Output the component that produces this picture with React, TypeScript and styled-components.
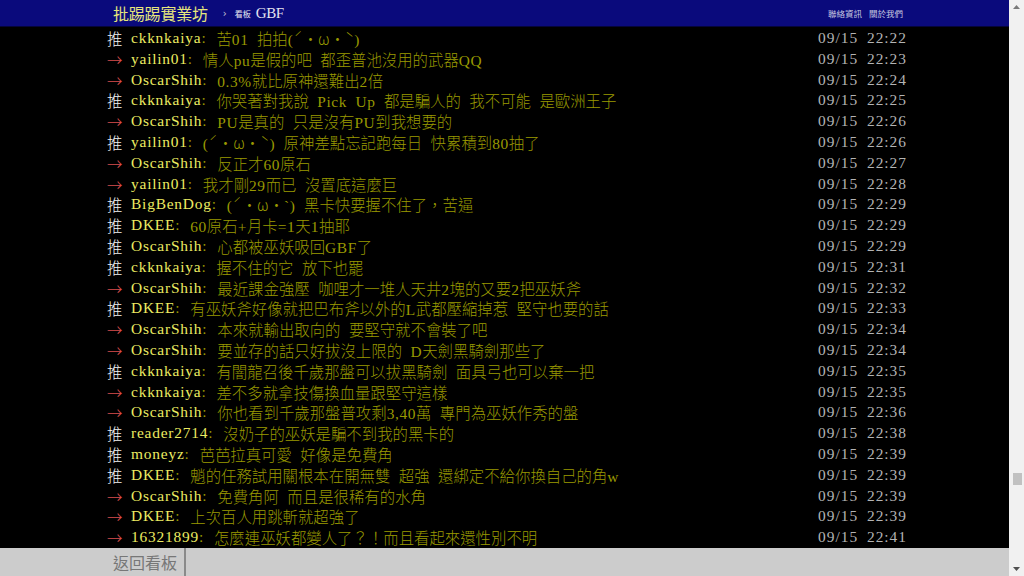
import React from 'react'
import styled, { createGlobalStyle } from 'styled-components'

type Push = {
  tag: '推' | '→'
  id: string
  text: string
  time: string
}

const pushes: Push[] = [
  { tag: '推', id: 'ckknkaiya', text: '苦01 拍拍(ˊ・ω・ˋ)', time: '09/15 22:22' },
  { tag: '→', id: 'yailin01', text: '情人pu是假的吧 都歪普池沒用的武器QQ', time: '09/15 22:23' },
  { tag: '→', id: 'OscarShih', text: '0.3%就比原神還難出2倍', time: '09/15 22:24' },
  { tag: '推', id: 'ckknkaiya', text: '你哭著對我說 Pick Up 都是騙人的 我不可能 是歐洲王子', time: '09/15 22:25' },
  { tag: '→', id: 'OscarShih', text: 'PU是真的 只是沒有PU到我想要的', time: '09/15 22:26' },
  { tag: '推', id: 'yailin01', text: '(ˊ・ω・ˋ) 原神差點忘記跑每日 快累積到80抽了', time: '09/15 22:26' },
  { tag: '→', id: 'OscarShih', text: '反正才60原石', time: '09/15 22:27' },
  { tag: '→', id: 'yailin01', text: '我才剛29而已 沒置底這麼巨', time: '09/15 22:28' },
  { tag: '推', id: 'BigBenDog', text: '(ˊ・ω・`) 黑卡快要握不住了，苦逼', time: '09/15 22:29' },
  { tag: '推', id: 'DKEE', text: '60原石+月卡=1天1抽耶', time: '09/15 22:29' },
  { tag: '推', id: 'OscarShih', text: '心都被巫妖吸回GBF了', time: '09/15 22:29' },
  { tag: '推', id: 'ckknkaiya', text: '握不住的它 放下也罷', time: '09/15 22:31' },
  { tag: '→', id: 'OscarShih', text: '最近課金強壓 咖哩才一堆人天井2塊的又要2把巫妖斧', time: '09/15 22:32' },
  { tag: '推', id: 'DKEE', text: '有巫妖斧好像就把巴布斧以外的L武都壓縮掉惹 堅守也要的話', time: '09/15 22:33' },
  { tag: '→', id: 'OscarShih', text: '本來就輸出取向的 要堅守就不會裝了吧', time: '09/15 22:34' },
  { tag: '→', id: 'OscarShih', text: '要並存的話只好拔沒上限的 D天劍黑騎劍那些了', time: '09/15 22:34' },
  { tag: '推', id: 'ckknkaiya', text: '有闇龍召後千歲那盤可以拔黑騎劍 面具弓也可以棄一把', time: '09/15 22:35' },
  { tag: '→', id: 'ckknkaiya', text: '差不多就拿技傷換血量跟堅守這樣', time: '09/15 22:35' },
  { tag: '→', id: 'OscarShih', text: '你也看到千歲那盤普攻剩3,40萬 專門為巫妖作秀的盤', time: '09/15 22:36' },
  { tag: '推', id: 'reader2714', text: '沒奶子的巫妖是騙不到我的黑卡的', time: '09/15 22:38' },
  { tag: '推', id: 'moneyz', text: '芭芭拉真可愛 好像是免費角', time: '09/15 22:39' },
  { tag: '推', id: 'DKEE', text: '魈的任務試用關根本在開無雙 超強 還綁定不給你換自己的角w', time: '09/15 22:39' },
  { tag: '→', id: 'OscarShih', text: '免費角阿 而且是很稀有的水角', time: '09/15 22:39' },
  { tag: '→', id: 'DKEE', text: '上次百人用跳斬就超強了', time: '09/15 22:39' },
  { tag: '→', id: '16321899', text: '怎麼連巫妖都變人了？！而且看起來還性別不明', time: '09/15 22:41' },
]

// ascii runs stay in the serif font, everything else goes to the CJK font
// so kaomoji like ˊ・ω・ˋ keep their full width
function splitRuns(text: string) {
  return text.match(/[\x20-\x7e]+|[^\x20-\x7e]+/g) || []
}

function PushText({ text }: { text: string }) {
  return (
    <Content>
      {splitRuns(text).map((run, i) =>
        /^[\x20-\x7e]+$/.test(run) ? <Narrow key={i}>{run}</Narrow> : <Wide key={i}>{run}</Wide>
      )}
    </Content>
  )
}

function App() {
  return (
    <>
      <GlobalStyle />
      <Screen>
        <Page>
          <TopBar>
            <Logo>批踢踢實業坊</Logo>
            <Chevron>›</Chevron>
            <BoardLabel>看板</BoardLabel>
            <BoardName>GBF</BoardName>
            <TopLinks>
              <span>聯絡資訊</span>
              <span>關於我們</span>
            </TopLinks>
          </TopBar>
          <Comments>
            {pushes.map((p, i) => (
              <Row key={i}>
                <Tag $arrow={p.tag === '→'}>{p.tag}</Tag>
                <UserId>{p.id}</UserId>
                <Colon>: </Colon>
                <PushText text={p.text} />
                <Time>{p.time}</Time>
              </Row>
            ))}
          </Comments>
          <Footer>
            <BackLink>返回看板</BackLink>
          </Footer>
        </Page>
        <ScrollBar>
          <ScrollArrow>
            <svg width="7" height="4" viewBox="0 0 7 4">
              <polygon points="0,4 3.5,0 7,4" fill="#7a7a7a" />
            </svg>
          </ScrollArrow>
          <ScrollTrack>
            <Thumb />
          </ScrollTrack>
          <ScrollArrow>
            <svg width="7" height="4" viewBox="0 0 7 4">
              <polygon points="0,0 3.5,4 7,0" fill="#505050" />
            </svg>
          </ScrollArrow>
        </ScrollBar>
      </Screen>
    </>
  )
}

const GlobalStyle = createGlobalStyle`
  html, body {
    margin: 0;
    padding: 0;
    background: #000;
    overflow: hidden;
  }
`

const Screen = styled.div`
  display: flex;
  width: 1024px;
  height: 576px;
  background: #000;
`

const Page = styled.div`
  flex: 1;
  display: flex;
  flex-direction: column;
  min-width: 0;
`

const TopBar = styled.div`
  height: 26px;
  flex-shrink: 0;
  display: flex;
  align-items: center;
  padding: 0 106px 0 113px;
  background: #0a0a7c;
  border-bottom: 1px solid #05053a;
  font-family: "Liberation Serif", "Noto Sans CJK TC", serif;
`

const Logo = styled.span`
  font-family: "Noto Sans CJK TC", sans-serif;
  font-size: 16px;
  color: #e6e67c;
  letter-spacing: -0.2px;
`

const Chevron = styled.span`
  margin: 0 8px 0 15px;
  font-family: "DejaVu Sans", sans-serif;
  font-size: 10px;
  color: #c8c8d8;
`

const BoardLabel = styled.span`
  font-family: "Noto Sans CJK TC", sans-serif;
  font-size: 8px;
  color: #e8e8f0;
  margin-right: 5px;
`

const BoardName = styled.span`
  font-size: 15px;
  color: #e4e4f0;
  letter-spacing: -0.4px;
`

const TopLinks = styled.div`
  margin-left: auto;
  display: flex;
  gap: 7px;
  font-family: "Noto Sans CJK TC", sans-serif;
  font-size: 8.5px;
  color: #c8c8e0;
`

const Comments = styled.div`
  flex: 1;
  padding: 1px 102px 0 106px;
  overflow: hidden;
  font-family: "Liberation Serif", "Noto Sans CJK TC", serif;
  font-size: 15.4px;
`

const Row = styled.div`
  display: flex;
  height: 20.8px;
  line-height: 20.8px;
  white-space: pre;
`

const Tag = styled.span<{ $arrow: boolean }>`
  width: 24px;
  flex-shrink: 0;
  padding-left: 1px;
  font-family: "Noto Sans CJK TC", sans-serif;
  font-weight: 300;
  color: ${({ $arrow }) => ($arrow ? '#d84e4e' : '#f4f4f4')};
`

const UserId = styled.span`
  color: #ecec62;
  letter-spacing: 0.8px;
`

const Colon = styled.span`
  color: #999900;
  width: 15px;
`

const Content = styled.span`
  color: #999900;
  word-spacing: 4px;
`

const Narrow = styled.span`
  letter-spacing: 0.6px;
`

const Wide = styled.span`
  font-family: "Noto Sans CJK TC", sans-serif;
  font-weight: 300;
`

const Time = styled.span`
  margin-left: auto;
  color: #b4b4b4;
  letter-spacing: 1px;
  word-spacing: 4px;
`

const Footer = styled.div`
  height: 28px;
  flex-shrink: 0;
  display: flex;
  background: #cccccc;
`

const BackLink = styled.div`
  width: 177px;
  padding-right: 7px;
  text-align: right;
  line-height: 28px;
  border-right: 2px solid #8a8a8a;
  font-family: "Noto Sans CJK TC", sans-serif;
  font-size: 16px;
  color: #777777;
`

const ScrollBar = styled.div`
  width: 15px;
  flex-shrink: 0;
  display: flex;
  flex-direction: column;
  background: #f1f1f1;
`

const ScrollArrow = styled.div`
  height: 14px;
  display: flex;
  align-items: center;
  justify-content: center;
`

const ScrollTrack = styled.div`
  flex: 1;
  display: flex;
  flex-direction: column;
  padding-top: 459px;
`

const Thumb = styled.div`
  height: 12px;
  margin: 0 2px 0 4px;
  background: #c1c1c1;
`

export default App
